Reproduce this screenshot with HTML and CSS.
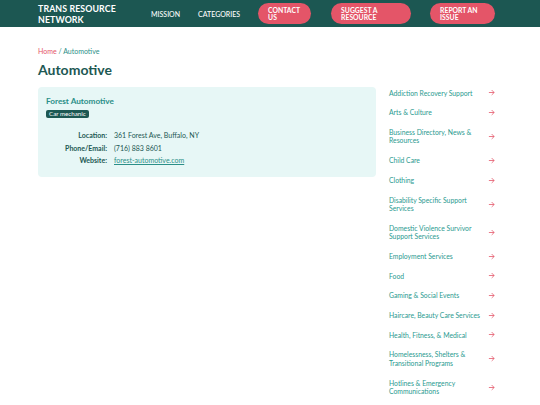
FILE: index.html
```html
<!DOCTYPE html>
<html>
<head>
<meta charset="utf-8">
<link rel="stylesheet" href="styles.css">
</head>
<body>
<header class="topbar">
  <div class="wrap topbar-inner">
    <div class="logo">TRANS RESOURCE<br>NETWORK</div>
    <nav class="nav">
      <a class="nav-link">MISSION</a>
      <a class="nav-link">CATEGORIES</a>
      <a class="btn btn-contact">CONTACT<br>US</a>
      <a class="btn btn-suggest">SUGGEST A<br>RESOURCE</a>
      <a class="btn btn-report">REPORT AN<br>ISSUE</a>
    </nav>
  </div>
</header>
<main class="wrap page">
  <div class="crumbs"><span class="crumb-home">Home</span> / Automotive</div>
  <h1 class="title">Automotive</h1>
  <div class="layout">
    <section class="main">
      <div class="card">
        <h2 class="card-title">Forest Automotive</h2>
        <span class="badge">Car mechanic</span>
        <dl class="details">
          <dt>Location:</dt><dd>361 Forest Ave, Buffalo, NY</dd>
          <dt>Phone/Email:</dt><dd>(716) 883 8601</dd>
          <dt>Website:</dt><dd><a class="site-link">forest-automotive.com</a></dd>
        </dl>
      </div>
    </section>
    <aside class="side">
      <ul class="cats">
        <li class="cat"><span>Addiction Recovery Support</span><svg class="arr" viewBox="0 0 8 8"><path d="M1 4H7M4.2 1.2L7 4L4.2 6.8"/></svg></li>
        <li class="cat"><span>Arts &amp; Culture</span><svg class="arr" viewBox="0 0 8 8"><path d="M1 4H7M4.2 1.2L7 4L4.2 6.8"/></svg></li>
        <li class="cat"><span>Business Directory, News &amp; Resources</span><svg class="arr" viewBox="0 0 8 8"><path d="M1 4H7M4.2 1.2L7 4L4.2 6.8"/></svg></li>
        <li class="cat"><span>Child Care</span><svg class="arr" viewBox="0 0 8 8"><path d="M1 4H7M4.2 1.2L7 4L4.2 6.8"/></svg></li>
        <li class="cat"><span>Clothing</span><svg class="arr" viewBox="0 0 8 8"><path d="M1 4H7M4.2 1.2L7 4L4.2 6.8"/></svg></li>
        <li class="cat"><span>Disability Specific Support Services</span><svg class="arr" viewBox="0 0 8 8"><path d="M1 4H7M4.2 1.2L7 4L4.2 6.8"/></svg></li>
        <li class="cat"><span>Domestic Violence Survivor Support Services</span><svg class="arr" viewBox="0 0 8 8"><path d="M1 4H7M4.2 1.2L7 4L4.2 6.8"/></svg></li>
        <li class="cat"><span>Employment Services</span><svg class="arr" viewBox="0 0 8 8"><path d="M1 4H7M4.2 1.2L7 4L4.2 6.8"/></svg></li>
        <li class="cat"><span>Food</span><svg class="arr" viewBox="0 0 8 8"><path d="M1 4H7M4.2 1.2L7 4L4.2 6.8"/></svg></li>
        <li class="cat"><span>Gaming &amp; Social Events</span><svg class="arr" viewBox="0 0 8 8"><path d="M1 4H7M4.2 1.2L7 4L4.2 6.8"/></svg></li>
        <li class="cat"><span>Haircare, Beauty Care Services</span><svg class="arr" viewBox="0 0 8 8"><path d="M1 4H7M4.2 1.2L7 4L4.2 6.8"/></svg></li>
        <li class="cat"><span>Health, Fitness, &amp; Medical</span><svg class="arr" viewBox="0 0 8 8"><path d="M1 4H7M4.2 1.2L7 4L4.2 6.8"/></svg></li>
        <li class="cat"><span>Homelessness, Shelters &amp; Transitional Programs</span><svg class="arr" viewBox="0 0 8 8"><path d="M1 4H7M4.2 1.2L7 4L4.2 6.8"/></svg></li>
        <li class="cat"><span>Hotlines &amp; Emergency Communications</span><svg class="arr" viewBox="0 0 8 8"><path d="M1 4H7M4.2 1.2L7 4L4.2 6.8"/></svg></li>
      </ul>
    </aside>
  </div>
</main>
</body>
</html>
```
FILE: styles.css
```css
* { box-sizing: border-box; }
html, body { margin: 0; padding: 0; }
body {
  font-family: Lato, "Open Sans", sans-serif;
  background: #ffffff;
  color: #1d5853;
}
.wrap { width: 464px; margin: 0 auto; }
.topbar { background: #1c5752; height: 27px; }
.topbar-inner { display: flex; align-items: center; height: 27px; }
.logo {
  color: #fff;
  font-weight: 700;
  font-size: 8.8px;
  line-height: 10.5px;
  letter-spacing: 0.1px;
  width: 113px;
  padding-top: 2px;
}
.nav { display: flex; align-items: center; }
.nav-link {
  color: #fff;
  font-size: 7px;
  font-weight: 500;
  margin-right: 18px;
}
.btn {
  display: flex;
  align-items: center;
  background: #e45568;
  color: #fff;
  font-weight: 700;
  font-size: 6.8px;
  line-height: 7px;
  height: 21px;
  border-radius: 11px;
  padding: 0 10px;
  margin-right: 20px;
}
.btn-contact { width: 53px; }
.btn-suggest { width: 80px; margin-right: 19px; }
.btn-report { width: 65px; margin-right: 0; }
.page { padding-top: 20px; }
.crumbs { font-size: 7px; color: #2b8f88; line-height: 8px; }
.crumb-home { color: #e45568; }
.title {
  margin: 6px 0 8px;
  font-size: 14px;
  line-height: 18px;
  font-weight: 700;
  color: #1d5853;
}
.layout { display: flex; gap: 7px; align-items: flex-start; }
.main { width: 338px; }
.card {
  background: #e7f7f6;
  border-radius: 4px;
  padding: 9px 8px 13px;
}
.card-title {
  margin: 0;
  font-size: 8.2px;
  line-height: 10px;
  font-weight: 700;
  color: #2b8f88;
}
.badge {
  display: block;
  width: fit-content;
  margin-top: 4px;
  background: #1d5853;
  color: #fff;
  font-size: 6.2px;
  line-height: 8px;
  padding: 0 3px;
  border-radius: 2px;
}
.details {
  display: grid;
  grid-template-columns: 61px auto;
  column-gap: 7px;
  row-gap: 4.5px;
  margin: 13px 0 0;
  font-size: 7px;
  line-height: 8px;
}
.details dt { text-align: right; font-weight: 700; color: #1d5853; }
.details dd { margin: 0; color: #1d5853; }
.site-link { color: #2b8f88; text-decoration: underline; }
.side { width: 119px; padding-left: 6px; }
.cats { list-style: none; margin: -4px 0 0; padding: 0; }
.cat {
  display: flex;
  align-items: center;
  justify-content: space-between;
  padding: 5.6px 0;
  font-size: 6.8px;
  line-height: 8.5px;
  color: #2b9a90;
}
.cat span { width: 97px; }
.arr {
  width: 7px;
  height: 7px;
  fill: none;
  stroke: #e45568;
  stroke-width: 0.9;
  margin-right: 7px;
}
```
